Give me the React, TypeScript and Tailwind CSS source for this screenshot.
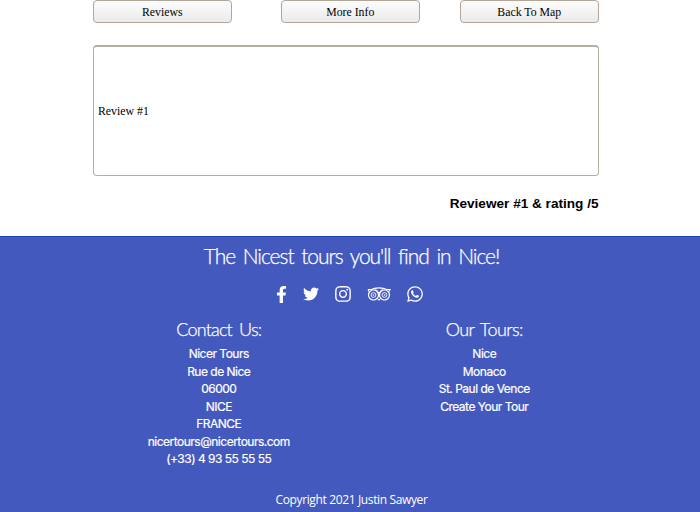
import { FaFacebookF, FaTwitter, FaInstagram, FaWhatsapp } from "react-icons/fa";

const actions = ["Reviews", "More Info", "Back To Map"];
const contact = ["Nicer Tours", "Rue de Nice", "06000", "NICE", "FRANCE", "nicertours@nicertours.com", "(+33) 4 93 55 55 55"];
const tours = ["Nice", "Monaco", "St. Paul de Vence", "Create Your Tour"];

function OwlIcon() {
  return (
    <svg viewBox="0 0 24 16" className="h-[16px] w-[24px]" fill="none" stroke="currentColor">
      <path d="M1 3.500h3.400C8 1.300 16 1.300 19.600 3.500H23l-1.300 2.300M1 3.500l1.300 2.300" strokeWidth="1.200" />
      <circle cx="6.500" cy="9" r="5" strokeWidth="1.200" />
      <circle cx="17.500" cy="9" r="5" strokeWidth="1.200" />
      <circle cx="6.500" cy="9" r="2.400" strokeWidth=".9" />
      <circle cx="17.500" cy="9" r="2.400" strokeWidth=".9" />
      <circle cx="6.500" cy="9" r=".8" fill="currentColor" stroke="none" />
      <circle cx="17.500" cy="9" r=".8" fill="currentColor" stroke="none" />
      <path d="M8 3.700c2.500.6 4 2.400 4 5 0-2.600 1.500-4.400 4-5M10.800 12.500l1.200 1.900 1.200-1.900" strokeWidth="1" />
    </svg>
  );
}

function Column({ title, lines, heading }: { title: string; lines: string[]; heading: string }) {
  return (
    <div className="flex w-[265.5px] flex-col items-center">
      <h3 className={`font-['Lato',sans-serif] text-[18px] leading-[26px] font-light whitespace-nowrap [-webkit-text-stroke:0.25px_white] ${heading}`}>{title}</h3>
      <div className="mt-[3.4px] text-center font-['Inter',sans-serif] text-[12px] leading-[17.45px] tracking-[-0.5px] [-webkit-text-stroke:0.2px_white]">
        {lines.map((line) => (
          <p key={line}>{line}</p>
        ))}
      </div>
    </div>
  );
}

export default function App() {
  return (
    <div className="flex h-[512px] w-[700px] flex-col overflow-hidden bg-white">
      <main className="flex h-[236px] shrink-0 flex-col pr-[101.5px] pl-[93px]">
        <div className="grid grid-cols-[188px_179px_138.5px]">
          {actions.map((label) => (
            <button
              key={label}
              className="h-[23px] w-[138.5px] rounded-[4px] border border-[#b3a698] bg-linear-to-b from-[#fcfcfc] to-[#ebebeb] font-['Liberation_Serif',serif] text-[11.8px] leading-[20px] text-black"
            >
              {label}
            </button>
          ))}
        </div>
        <div className="mt-[22px] flex h-[131px] items-center rounded-[4px] border border-t-2 border-[#b5ada2] pt-px pl-[4px] font-['Liberation_Serif',serif] text-[11.8px] text-black">
          Review #1
        </div>
        <p className="mt-[18px] text-right font-['Liberation_Sans',sans-serif] text-[13.6px] leading-[19px] font-bold text-black">
          Reviewer #1 &amp; rating /5
        </p>
      </main>
      <footer className="flex flex-1 flex-col items-center border-t border-[#1745b0] bg-[#4459be] text-white">
        <h2 className="mt-[4px] ml-[3px] font-['Lato',sans-serif] text-[21px] leading-[30px] font-light tracking-[-1.05px] whitespace-nowrap [-webkit-text-stroke:0.25px_white] [word-spacing:3px]">
          The Nicest tours you'll find in Nice!
        </h2>
        <div className="mt-[14px] flex h-[18px] items-center">
          <FaFacebookF className="h-[17px] w-[11px]" />
          <FaTwitter className="ml-[16px] size-[16px]" />
          <FaInstagram className="ml-[15px] size-[18px]" />
          <div className="ml-[15px]">
            <OwlIcon />
          </div>
          <FaWhatsapp className="ml-[15px] size-[18px]" />
        </div>
        <div className="mt-[13px] ml-[3px] flex w-[531px]">
          <Column title="Contact Us:" lines={contact} heading="tracking-[-0.8px] [word-spacing:3px]" />
          <Column title="Our Tours:" lines={tours} heading="tracking-[-0.55px] [word-spacing:2px]" />
        </div>
        <p className="mt-[23px] ml-[3px] font-['Open_Sans',sans-serif] text-[12px] leading-[18px] tracking-[-0.36px]">
          Copyright 2021 Justin Sawyer
        </p>
      </footer>
    </div>
  );
}
